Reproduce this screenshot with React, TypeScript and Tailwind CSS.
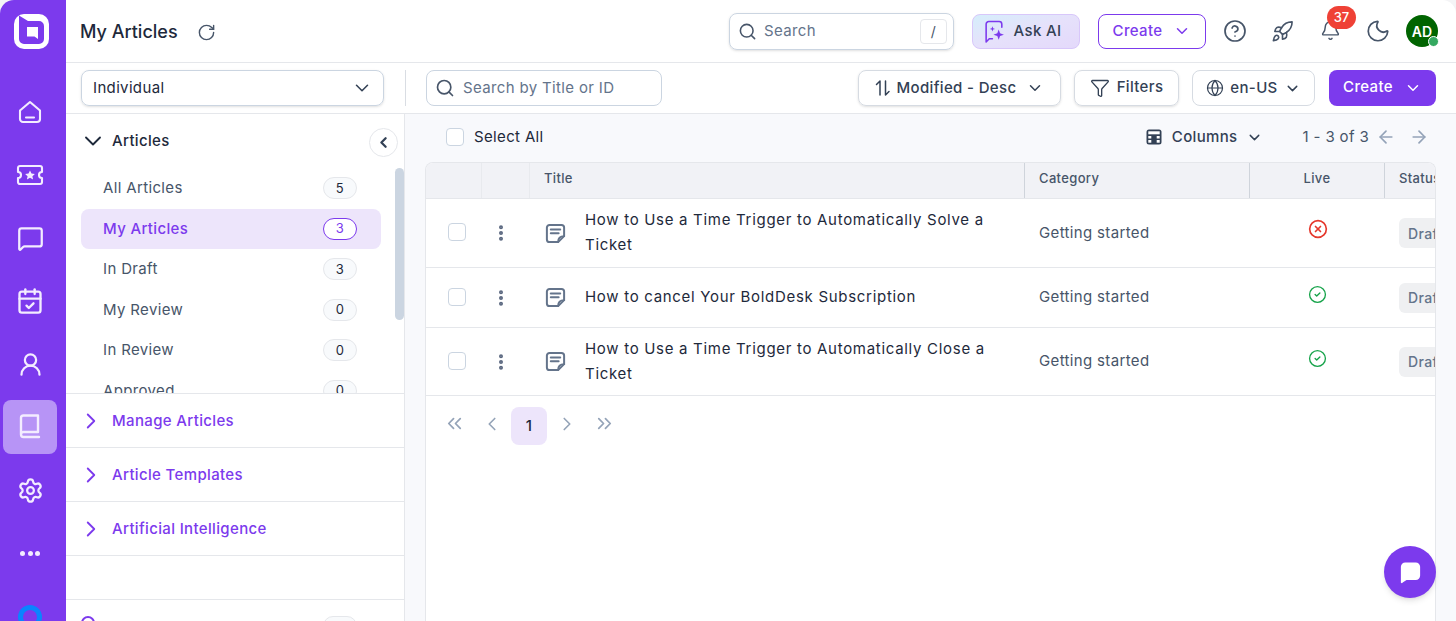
import React from "react";
import { ChevronDown, ChevronLeft, ChevronRight, ChevronsLeft, ChevronsRight, ArrowLeft, ArrowRight, Search, RotateCw, CircleHelp, Rocket, Bell, Moon, Funnel, Globe, MessageSquare, CalendarCheck, UserRound, Settings, EllipsisVertical, CircleX, CircleCheck } from "lucide-react";

const HomeIcon = () => (
  <svg width="26" height="26" viewBox="0 0 26 26" fill="none" stroke="currentColor" strokeWidth="2.1" strokeLinejoin="round" strokeLinecap="round">
    <path d="M3 11.500 13 3l10 8.500V20a3 3 0 0 1-3 3H6a3 3 0 0 1-3-3z" />
    <path d="M9 18.500h8" />
  </svg>
);
const TicketIcon = () => (
  <svg width="28" height="26" viewBox="0 0 28 26" fill="none" stroke="currentColor" strokeWidth="2.1" strokeLinejoin="round">
    <path d="M4 4h20a2 2 0 0 1 2 2v4a3 3 0 0 0 0 6v4a2 2 0 0 1-2 2H4a2 2 0 0 1-2-2v-4a3 3 0 0 0 0-6V6a2 2 0 0 1 2-2z" />
    <path fill="currentColor" stroke="none" d="m14 8.500 1.500 3 3.400.4-2.500 2.300.7 3.300-3.100-1.700-3.100 1.700.7-3.300-2.500-2.300 3.400-.4z" />
  </svg>
);
const BookIcon = () => (
  <svg width="26" height="28" viewBox="0 0 26 28" fill="none" stroke="currentColor" strokeWidth="2.4" strokeLinecap="round" strokeLinejoin="round">
    <path d="M4 21V5a2.500 2.500 0 0 1 2.500-2.500H21V19H6.500A2.500 2.500 0 0 0 4 21.500 2.500 2.500 0 0 0 6.500 24H22" />
  </svg>
);
const ArticleIcon = () => (
  <svg width="21" height="21" viewBox="0 0 20 20" fill="none" stroke="#64748b" strokeWidth="1.900" strokeLinejoin="round" strokeLinecap="round">
    <path d="M12.500 18.200H4.300a2.500 2.500 0 0 1-2.500-2.500V4.300a2.500 2.500 0 0 1 2.500-2.500h11.400a2.500 2.500 0 0 1 2.500 2.500v8.200z" />
    <path d="M5.500 6.200h9M5.500 9.700h7.500M12.500 18.200c0-3 1.500-5.700 5.700-5.700" />
  </svg>
);
const SortIcon = () => (
  <svg width="16" height="18" viewBox="0 0 16 18" fill="none" stroke="#334155" strokeWidth="1.500" strokeLinecap="round" strokeLinejoin="round">
    <path d="M5 16V2L1.500 5.500M10.500 2v14l3.500-3.500" />
  </svg>
);
const ColumnsIcon = () => (
  <svg width="16" height="16" viewBox="0 0 16 16">
    <rect x="0.500" y="0.500" width="15" height="15" rx="2.500" fill="#334155" />
    <rect x="2.300" y="2.300" width="11.400" height="3" fill="#fff" />
    <rect x="2.300" y="7" width="3" height="2.500" fill="#fff" />
    <rect x="10.700" y="7" width="3" height="2.500" fill="#fff" />
    <rect x="2.300" y="11" width="3" height="2.700" fill="#fff" />
    <rect x="10.700" y="11" width="3" height="2.700" fill="#fff" />
  </svg>
);
const AiIcon = () => (
  <svg width="23" height="23" viewBox="0 0 22 22" fill="none" stroke="#7c3aed" strokeWidth="1.500" strokeLinejoin="round" strokeLinecap="round">
    <path d="M9 18H6l-3 3V4a2.500 2.500 0 0 1 2.500-2.500h10A2.500 2.500 0 0 1 18 4v3" />
    <path fill="#7c3aed" stroke="none" d="m15 9 1.300 3.700L20 14l-3.700 1.300L15 19l-1.300-3.700L10 14l3.700-1.300zM9 6l.7 1.800 1.800.7-1.800.7L9 11l-.7-1.800-1.800-.7 1.800-.7z" />
  </svg>
);
const Logo = () => (
  <svg width="35" height="35" viewBox="0 0 35 35">
    <rect width="35" height="35" rx="10" fill="#fff" />
    <path fill="#7c3aed" d="M5 1.500 L14 7 H25 A5 5 0 0 1 30 12 V25 A5 5 0 0 1 25 30 H10 A5 5 0 0 1 5 25 Z" />
    <path fill="#fff" d="M13 13 H24 V25 L20.500 22.500 H13 Z" />
  </svg>
);

const items = [
  ["All Articles", "5"],
  ["My Articles", "3"],
  ["In Draft", "3"],
  ["My Review", "0"],
  ["In Review", "0"],
  ["Approved", "0"],
];

const rows = [
  { title: "How to Use a Time Trigger to Automatically Solve a Ticket", live: false, h: "h-[69px]", dy: "-mt-2" },
  { title: "How to cancel Your BoldDesk Subscription", live: true, h: "h-[60px]", dy: "-mt-1.5" },
  { title: "How to Use a Time Trigger to Automatically Close a Ticket", live: true, h: "h-[68px]", dy: "-mt-1.5" },
];

const railItem = "flex h-[54px] w-[54px] items-center justify-center";

export default function App() {
  return (
    <div className="h-[621px] w-[1456px] bg-[#f4f4f6]">
      <div className="relative flex h-[621px] w-[1456px] overflow-hidden rounded-t-[14px] bg-white tracking-[0.35px] text-[#1e293b] [font-family:Inter,'Liberation_Sans',sans-serif]">
        <nav className="flex w-[66px] shrink-0 flex-col items-start bg-[#7c3aed] pt-[14px] pl-[3px] text-[#f3ecff]">
          <div className="mb-9 ml-[11px] h-[35px]"><Logo /></div>
          <div className="flex flex-col items-center gap-[9px]">
            <span className={railItem}><HomeIcon /></span>
            <span className={railItem}><TicketIcon /></span>
            <span className={railItem}><MessageSquare size={27} strokeWidth={2} /></span>
            <span className={railItem}><CalendarCheck size={28} strokeWidth={2} /></span>
            <span className={railItem}><UserRound size={27} strokeWidth={2} /></span>
            <span className={`${railItem} rounded-lg bg-[#b794f6]`}><BookIcon /></span>
            <span className={railItem}><Settings size={27} strokeWidth={2} /></span>
            <span className={`${railItem} gap-[2.500px]`}>
              <i className="h-[5px] w-[5px] rounded-full bg-[#f3ecff]" />
              <i className="h-[5px] w-[5px] rounded-full bg-[#f3ecff]" />
              <i className="h-[5px] w-[5px] rounded-full bg-[#f3ecff]" />
            </span>
            <span className="mt-[16px] h-[24px] w-[24px] shrink-0 rounded-full border-[5px] border-[#0a84ff]" />
          </div>
        </nav>

        <div className="flex min-w-0 flex-1 flex-col">
          <header className="flex h-[63px] shrink-0 items-center border-b border-[#e5e7eb] pl-[14px] pr-[18px]">
            <h1 className="text-[18px] font-medium tracking-normal text-[#1e293b]">My Articles</h1>
            <RotateCw size={19} className="ml-[19px] mt-0.5 text-[#475569]" strokeWidth={1.800} />
            <div className="ml-auto flex h-[37px] w-[225px] items-center rounded-lg border border-[#cbd5e1] pl-2 pr-[6px] shadow-sm">
              <Search size={19} className="text-[#475569]" />
              <span className="ml-[7px] text-[15px] text-[#64748b]">Search</span>
              <span className="ml-auto flex h-[25px] w-[27px] items-center justify-center rounded border border-[#e5e7eb] text-[14px] text-[#475569]">/</span>
            </div>
            <button className="ml-[18px] flex h-[35px] w-[108px] items-center justify-center gap-[8px] rounded-lg border border-[#d8c7fa] bg-gradient-to-br from-[#d5eefb] via-[#e6e1fb] to-[#e4d9fb] pr-[8px] text-[15px] font-medium text-[#334155]"><AiIcon />Ask AI</button>
            <button className="ml-[18px] flex h-[35px] w-[108px] items-center justify-center gap-[11px] rounded-lg border border-[#7c3aed] text-[15px] font-medium text-[#7c3aed]">Create <ChevronDown size={18} /></button>
            <CircleHelp size={24} className="ml-[17px] text-[#475569]" strokeWidth={1.700} />
            <Rocket size={23} className="ml-[24px] text-[#475569]" strokeWidth={1.700} />
            <div className="relative ml-[26px] h-[22px] w-[22px]">
              <Bell size={21} className="text-[#475569]" strokeWidth={1.700} />
              <span className="absolute -top-[14px] left-[7px] flex h-[23px] w-[29px] items-center justify-center rounded-full bg-[#ef4136] text-[13px] font-medium tracking-normal text-white">37</span>
            </div>
            <Moon size={26} className="ml-[23px] text-[#475569]" strokeWidth={1.600} />
            <div className="relative ml-[15px] flex h-[32px] w-[32px] items-center justify-center rounded-full bg-[#006400] text-[14px] font-semibold tracking-normal text-white">
              AD
              <span className="absolute bottom-0 -right-px h-[11px] w-[11px] rounded-full border border-white bg-[#34a860]" />
            </div>
          </header>

          <div className="flex h-[51px] shrink-0 items-center border-b border-[#e5e7eb] pl-[15px] pr-[20px]">
            <div className="flex h-[36px] w-[303px] items-center justify-between rounded-lg border border-[#cbd5e1] pl-[11px] pr-[10px] text-[15px] shadow-sm">
              Individual <ChevronDown size={22} strokeWidth={1.700} className="text-[#334155]" />
            </div>
            <span className="ml-[21px] h-[36px] w-px bg-[#d9dde3]" />
            <div className="ml-[20px] flex h-[36px] w-[236px] items-center rounded-lg border border-[#cbd5e1] pl-2 text-[15px] text-[#64748b]">
              <Search size={20} className="text-[#475569]" />
              <span className="ml-[8px]">Search by Title or ID</span>
            </div>
            <button className="ml-auto flex h-[36px] w-[203px] items-center justify-center gap-[6px] rounded-lg border border-[#d6dbe2] text-[15px] font-medium text-[#334155] shadow-sm"><SortIcon />Modified - Desc <ChevronDown size={18} className="ml-[4px]" /></button>
            <button className="ml-[13px] flex h-[36px] w-[105px] items-center justify-center gap-[7px] rounded-lg border border-[#d6dbe2] text-[15px] font-medium text-[#334155] shadow-sm"><Funnel size={20} strokeWidth={1.600} /><span className="-mt-[1px]">Filters</span></button>
            <button className="ml-[13px] flex h-[36px] w-[123px] items-center justify-center gap-[6px] rounded-lg border border-[#d6dbe2] text-[15px] font-medium text-[#334155]"><Globe size={18} strokeWidth={1.600} />en-US <ChevronDown size={17} /></button>
            <button className="ml-[14px] flex h-[36px] w-[107px] items-center justify-center gap-[11px] rounded-lg bg-[#7c3aed] text-[15px] font-medium text-white"><span className="-mt-[1px]">Create</span> <ChevronDown size={18} /></button>
          </div>

          <div className="flex min-h-0 flex-1">
            <aside className="relative flex w-[339px] shrink-0 flex-col border-r border-[#e5e7eb]">
              <div className="relative h-[280px] shrink-0 overflow-hidden border-b border-[#e5e7eb]">
                <div className="flex h-[54px] items-center pl-[13px] text-[15px] font-medium text-[#1e293b]">
                  <ChevronDown size={28} strokeWidth={1.600} />
                  <span className="ml-[5px]">Articles</span>
                </div>
                <ul className="ml-[15px] w-[300px]">
                  {items.map(([label, n]) => {
                    const active = label === "My Articles";
                    return (
                      <li key={label} className={`flex h-[40.500px] items-center justify-between rounded-lg pl-[22px] pr-[24px] text-[15px] ${active ? "bg-[#ede5fb] font-medium text-[#7c3aed]" : "text-[#475569]"}`}>
                        <span>{label}</span>
                        <span className={`flex h-[22px] w-[34px] items-center justify-center rounded-full border text-[13px] ${active ? "border-[#7c3aed] bg-white font-normal text-[#7c3aed]" : "border-[#e5e7eb] bg-[#f8fafc] text-[#1e293b]"}`}>{n}</span>
                      </li>
                    );
                  })}
                </ul>
                <span className="absolute right-0 top-[54px] h-[152px] w-[9px] rounded-full bg-[#cbd5e1]" />
              </div>
              {["Manage Articles", "Article Templates", "Artificial Intelligence"].map((s) => (
                <div key={s} className="flex h-[54px] shrink-0 items-center border-b border-[#e5e7eb] pl-[12px] pt-[1px] text-[15px] font-medium text-[#7c3aed]">
                  <ChevronRight size={26} strokeWidth={1.700} />
                  <span className="ml-[8px]">{s}</span>
                </div>
              ))}
              <div className="mt-[43px] flex flex-1 items-start justify-between border-t border-[#e5e7eb] pl-[15px] pr-[47px] pt-[16px]">
                <span className="h-[10px] w-[14px] rounded-t-full border-2 border-[#7c3aed]" />
                <span className="h-[20px] w-[34px] rounded-full border border-[#e5e7eb] bg-[#f8fafc]" />
              </div>
              <button className="absolute right-[6px] top-[14px] flex h-[29px] w-[29px] items-center justify-center rounded-full border border-[#e5e7eb] bg-white text-[#334155]">
                <ChevronLeft size={17} strokeWidth={3.200} />
              </button>
            </aside>

            <main className="flex min-w-0 flex-1 flex-col bg-[#f8f9fc] pl-[20px] pr-[20px]">
              <div className="flex h-[48px] shrink-0 items-center pb-[2px] pl-[21px] pr-[7px] text-[15px]">
                <span className="h-[18px] w-[18px] rounded border border-[#cbd5e1] bg-white" />
                <span className="ml-[10px] text-[#1e293b]">Select All</span>
                <span className="ml-auto"><ColumnsIcon /></span>
                <span className="ml-[10px] font-medium text-[#334155]">Columns</span>
                <ChevronDown size={17} className="ml-[8px] text-[#334155]" />
                <span className="ml-[40px] text-[#475569]">1 - 3 of 3</span>
                <ArrowLeft size={20} className="ml-[7px] text-[#94a3b8]" />
                <ArrowRight size={20} className="ml-[13px] text-[#94a3b8]" />
              </div>
              <div className="flex-1 overflow-hidden rounded-t-lg border border-b-0 border-[#e5e7eb] bg-white">
                <div className="flex h-[36px] items-stretch border-b border-[#e5e7eb] bg-[#f1f2f6] text-[13px] font-medium text-[#475569]">
                  <div className="w-[56px] shrink-0 border-r border-[#e8eaee]" />
                  <div className="w-[48px] shrink-0 border-r border-[#e8eaee]" />
                  <div className="flex w-[495px] shrink-0 items-center border-r border-[#cfd4db] pb-[3px] pl-[14px]">Title</div>
                  <div className="flex w-[225px] shrink-0 items-center border-r border-[#cfd4db] pb-[3px] pl-[14px]">Category</div>
                  <div className="flex w-[135px] shrink-0 items-center justify-center border-r border-[#cfd4db] pb-[3px]">Live</div>
                  <div className="flex min-w-0 flex-1 items-center overflow-hidden whitespace-nowrap pb-[3px] pl-[14px]">Status</div>
                </div>
                {rows.map((r, i) => (
                  <div key={i} className={`flex ${r.h} items-center border-b border-[#e5e7eb] text-[15px]`}>
                    <div className="flex w-[56px] shrink-0 justify-center pl-[6px]"><span className="mb-[2px] h-[18px] w-[18px] rounded border border-[#cbd5e1] bg-white" /></div>
                    <div className="flex w-[48px] shrink-0 justify-center pr-[10px] text-[#5b6880]"><EllipsisVertical size={20} strokeWidth={2.800} /></div>
                    <div className="flex w-[495px] shrink-0 items-center pl-[15px]">
                      <ArticleIcon />
                      <p className="mb-[2px] ml-[19px] w-[420px] text-[15px] leading-[25px] tracking-[0.7px] text-[#1e293b]">{r.title}</p>
                    </div>
                    <div className="w-[225px] shrink-0 pl-[14px] text-[#475569]">Getting started</div>
                    <div className={`flex w-[135px] shrink-0 justify-center ${r.dy}`}>
                      {r.live ? <CircleCheck size={19} className="text-[#16a34a]" strokeWidth={1.700} /> : <CircleX size={20} className="text-[#e5392d]" strokeWidth={2} />}
                    </div>
                    <div className="min-w-0 flex-1 overflow-hidden pl-[14px]">
                      <span className="flex h-[30px] w-[60px] items-center rounded-md bg-[#eff0f2] pl-[9px] text-[14px] font-medium text-[#64748b]">Draft</span>
                    </div>
                  </div>
                ))}
                <div className="flex h-[58px] items-center pl-[17px] text-[#94a3b8]">
                  <ChevronsLeft size={23} strokeWidth={1.800} className="-mt-[3px]" />
                  <ChevronLeft size={22} strokeWidth={1.800} className="-mt-[3px] ml-[15px]" />
                  <span className="ml-[8px] mt-[2px] flex h-[38px] w-[36px] items-center justify-center rounded-lg bg-[#ede5fb] text-[15px] font-medium text-[#1e293b]">1</span>
                  <ChevronRight size={22} strokeWidth={1.800} className="-mt-[3px] ml-[9px]" />
                  <ChevronsRight size={23} strokeWidth={1.800} className="-mt-[3px] ml-[15px]" />
                </div>
              </div>
            </main>
          </div>
        </div>

        <button className="absolute left-[1384px] top-[546px] flex h-[52px] w-[52px] items-center justify-center rounded-full bg-[#7c3aed] shadow-md">
          <svg width="21" height="23" viewBox="0 0 24 26" fill="#fff"><path d="M6 1.500h12a5 5 0 0 1 5 5v10a5 5 0 0 1-5 5H7.500l-4.500 3a1 1 0 0 1-2-.8V6.500a5 5 0 0 1 5-5z" /></svg>
        </button>
      </div>
    </div>
  );
}
